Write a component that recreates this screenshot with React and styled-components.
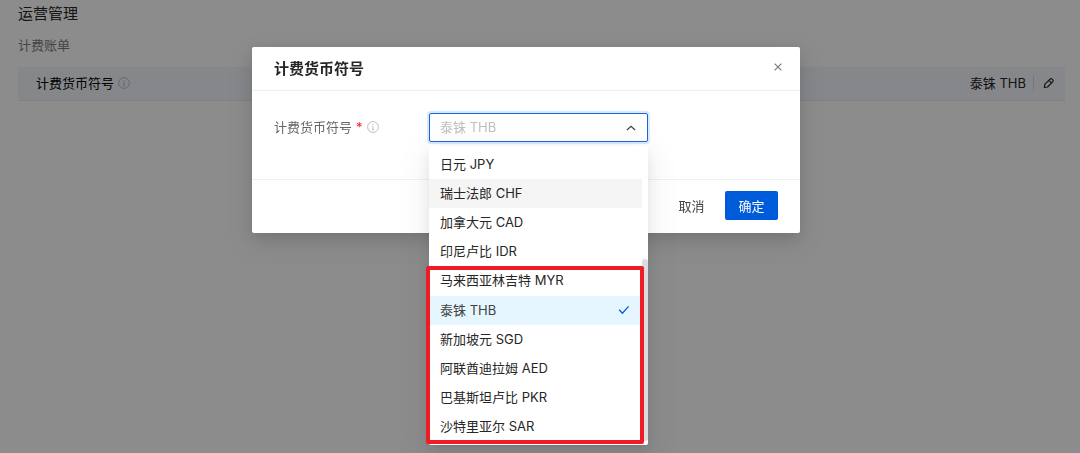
import React, { useState } from 'react';
import styled, { createGlobalStyle } from 'styled-components';

const currencies = [
  '日元 JPY',
  '瑞士法郎 CHF',
  '加拿大元 CAD',
  '印尼卢比 IDR',
  '马来西亚林吉特 MYR',
  '泰铢 THB',
  '新加坡元 SGD',
  '阿联酋迪拉姆 AED',
  '巴基斯坦卢比 PKR',
  '沙特里亚尔 SAR',
];

const InfoIcon = () => (
  <svg width='12' height='12' viewBox='0 0 12 12' fill='none' stroke='currentColor' aria-hidden='true'>
    <circle cx='6' cy='6' r='5.4' strokeWidth='0.9' />
    <path d='M6 3v1M5.2 5.3H6v3.3M5 8.7h2' strokeWidth='0.9' />
  </svg>
);

const EditIcon = () => (
  <svg width='12' height='12' viewBox='0 0 12 12' fill='none' stroke='currentColor' aria-hidden='true'>
    <path
      d='M1.4 10.4l.4-3.1L7 2.1a1.5 1.5 0 0 1 2.1 0l.6.6a1.5 1.5 0 0 1 0 2.1L4.5 10zM6 3.4l2.5 2.5'
      strokeWidth='1.2'
      strokeLinejoin='round'
    />
  </svg>
);

const CloseIcon = () => (
  <svg width='8' height='8' viewBox='0 0 8 8' fill='none' stroke='currentColor' aria-hidden='true'>
    <path d='M.6.6l6.8 6.8M7.4.6L.6 7.4' strokeWidth='1.3' />
  </svg>
);

const ArrowIcon = () => (
  <svg width='10' height='6' viewBox='0 0 10 6' fill='none' stroke='currentColor' aria-hidden='true'>
    <path d='M.9 5L5 1.2 9.1 5' strokeWidth='1.2' />
  </svg>
);

const CheckIcon = () => (
  <svg width='12' height='10' viewBox='0 0 12 10' fill='none' stroke='currentColor' aria-hidden='true'>
    <path d='M1.2 4.8l3.2 3.4 6.2-6.8' strokeWidth='1.3' />
  </svg>
);

const App = () => {
  const [visible, setVisible] = useState(true);
  const [open, setOpen] = useState(true);
  const [currency, setCurrency] = useState('泰铢 THB');
  const [hovered, setHovered] = useState('瑞士法郎 CHF');

  const handleSelect = (item) => {
    setCurrency(item);
    setOpen(false);
  };

  return (
    <>
      <GlobalStyle />
      <Page>
        <PageTitle>运营管理</PageTitle>
        <SectionTitle>计费账单</SectionTitle>
        <SettingRow>
          <SettingName>
            计费货币符号
            <Info>
              <InfoIcon />
            </Info>
          </SettingName>
          <SettingValue>{currency}</SettingValue>
          <EditBtn aria-label='编辑' onClick={() => setVisible(true)}>
            <EditIcon />
          </EditBtn>
        </SettingRow>
      </Page>
      {visible && (
        <Mask>
          <Modal role='dialog' aria-labelledby='modal-title'>
            <ModalHeader>
              <ModalTitle id='modal-title'>计费货币符号</ModalTitle>
              <CloseBtn aria-label='关闭' onClick={() => setVisible(false)}>
                <CloseIcon />
              </CloseBtn>
            </ModalHeader>
            <ModalBody>
              <FieldLabel htmlFor='currency'>
                计费货币符号
                <Required>*</Required>
                <Info>
                  <InfoIcon />
                </Info>
              </FieldLabel>
              <SelectWrap>
                <Select
                  id='currency'
                  value={currency}
                  $open={open}
                  onMouseDown={(e) => {
                    e.preventDefault();
                    setOpen(!open);
                  }}
                  onChange={(e) => setCurrency(e.target.value)}
                >
                  {currencies.map((item) => (
                    <option key={item}>{item}</option>
                  ))}
                </Select>
                <Arrow $open={open}>
                  <ArrowIcon />
                </Arrow>
                {open && (
                  <Dropdown>
                    <OptionList role='listbox' aria-label='计费货币符号'>
                      {currencies.map((item) => (
                        <Option
                          key={item}
                          role='option'
                          aria-selected={item === currency}
                          $active={item === hovered}
                          $selected={item === currency}
                          onMouseEnter={() => setHovered(item)}
                          onClick={() => handleSelect(item)}
                        >
                          {item}
                          {item === currency && <CheckIcon />}
                        </Option>
                      ))}
                    </OptionList>
                    <ScrollThumb />
                    <Highlight />
                  </Dropdown>
                )}
              </SelectWrap>
            </ModalBody>
            <ModalFooter>
              <Button onClick={() => setVisible(false)}>取消</Button>
              <Button $primary onClick={() => setVisible(false)}>
                确定
              </Button>
            </ModalFooter>
          </Modal>
        </Mask>
      )}
    </>
  );
};

export default App;

const GlobalStyle = createGlobalStyle`
  * {
    box-sizing: border-box;
  }

  body {
    margin: 0;
    background-color: #fff;
    color: #262626;
    font-family: Inter, 'Noto Sans CJK SC', sans-serif;
    font-size: 13px;
    line-height: 20px;
  }

  button,
  select {
    padding: 0;
    border: none;
    background: none;
    color: inherit;
    font: inherit;
    cursor: pointer;
  }
`;

const Page = styled.main`
  padding: 0 15px 0 18px;
`;

const PageTitle = styled.h1`
  margin: 0 0 7px;
  font-size: 15px;
  font-weight: 400;
  line-height: 28px;
`;

const SectionTitle = styled.h2`
  margin: 0 0 12px;
  color: #7f7f7f;
  font-size: 13px;
  font-weight: 400;
`;

const SettingRow = styled.section`
  display: flex;
  align-items: center;
  height: 34px;
  padding: 0 10px 1px 18px;
  border-bottom: 1px solid #e8ebef;
  background-color: #f3f6fb;
`;

const SettingName = styled.div`
  display: flex;
  flex: 1;
  align-items: center;
  color: #000;
`;

const Info = styled.span`
  display: flex;
  margin-left: 4px;
  color: #b8b8b8;
`;

const SettingValue = styled.span`
  padding-right: 7px;
  border-right: 1px solid #d5d8dc;
  line-height: 15px;
`;

const EditBtn = styled.button`
  display: flex;
  margin-left: 9px;
`;

const Mask = styled.div`
  position: fixed;
  inset: 0;
  display: flex;
  justify-content: center;
  align-items: flex-start;
  padding: 47px 28px 0 0;
  background-color: rgba(0, 0, 0, 0.45);
`;

const Modal = styled.div`
  width: 100%;
  max-width: 548px;
  border-radius: 2px;
  background-color: #fff;
  box-shadow: 0 6px 16px rgba(0, 0, 0, 0.12), 0 9px 28px 8px rgba(0, 0, 0, 0.06);
`;

const ModalHeader = styled.header`
  display: flex;
  justify-content: space-between;
  align-items: center;
  height: 44px;
  padding: 0 18px 0 22px;
  border-bottom: 1px solid #f0f0f0;
`;

const ModalTitle = styled.h3`
  margin: 0;
  font-size: 15px;
  font-weight: 600;
`;

const CloseBtn = styled.button`
  display: flex;
  padding: 0 0 3px;
  color: #808080;
`;

const ModalBody = styled.div`
  display: flex;
  padding: 22px 22px 37px;
`;

const FieldLabel = styled.label`
  display: flex;
  align-items: center;
  width: 155px;
  padding-bottom: 2px;
  color: #666;
`;

const Required = styled.span`
  margin-left: 4px;
  color: #f5222d;
`;

const SelectWrap = styled.div`
  position: relative;
  width: 219px;
`;

const Select = styled.select`
  display: block;
  width: 100%;
  height: 29px;
  padding: 0 10px 2px;
  border: 1px solid #1a66d6;
  border-radius: 2px;
  background-color: #fff;
  box-shadow: 0 0 0 2px rgba(0, 120, 230, 0.15);
  color: ${({ $open }) => ($open ? '#bfbfbf' : '#262626')};
  appearance: none;
  outline: none;
`;

const Arrow = styled.span`
  position: absolute;
  top: 12px;
  right: 12px;
  display: flex;
  color: #434343;
  pointer-events: none;
  transform: ${({ $open }) => ($open ? 'none' : 'rotate(180deg)')};
`;

const Dropdown = styled.div`
  position: absolute;
  top: 100%;
  left: 0;
  z-index: 10;
  width: 100%;
  margin-top: 4px;
  padding: 4px 6px 3px 0;
  border-radius: 2px;
  background-color: #fff;
  box-shadow: 0 3px 6px -4px rgba(0, 0, 0, 0.12), 0 6px 16px rgba(0, 0, 0, 0.08), 0 9px 28px 8px rgba(0, 0, 0, 0.05);
`;

const OptionList = styled.ul`
  display: grid;
  grid-auto-rows: 1fr;
  height: 292px;
  margin: 0;
  padding: 0;
  list-style: none;
`;

const Option = styled.li`
  display: flex;
  justify-content: space-between;
  align-items: center;
  padding: 0 12px 2px 11px;
  background-color: ${({ $active, $selected }) => ($selected ? '#e6f6ff' : $active ? '#f5f5f5' : '#fff')};
  color: ${({ $selected }) => ($selected ? '#434343' : '#262626')};
  cursor: pointer;

  svg {
    color: #005bdb;
  }
`;

const ScrollThumb = styled.span`
  position: absolute;
  right: 0;
  bottom: 4px;
  width: 6px;
  height: 182px;
  border-radius: 3px;
  background-color: #dcdce0;
`;

const Highlight = styled.span`
  position: absolute;
  right: 4px;
  bottom: 1px;
  left: -3px;
  height: 178px;
  border: 4px solid #ee1c25;
  border-radius: 2px;
  pointer-events: none;
`;

const ModalFooter = styled.footer`
  display: flex;
  justify-content: flex-end;
  gap: 7px;
  padding: 11px 22px 13px;
  border-top: 1px solid #f0f0f0;
`;

const Button = styled.button`
  width: 53px;
  height: 29px;
  border-radius: 2px;
  background-color: ${({ $primary }) => ($primary ? '#005bdb' : 'transparent')};
  color: ${({ $primary }) => ($primary ? '#fff' : '#434343')};
`;
